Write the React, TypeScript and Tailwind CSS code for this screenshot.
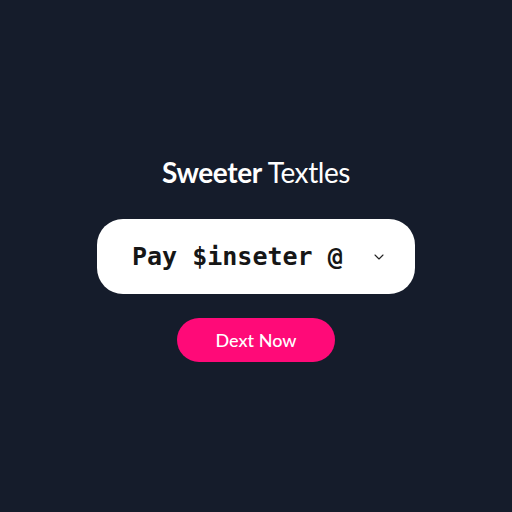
import React from "react";

const App = () => {
  return (
    <div className="w-[512px] h-[512px] bg-[#151c2b] flex flex-col items-center pt-[154px]">
      <h1 className="text-[28px] text-white leading-[36px] font-['Lato',sans-serif] tracking-[-0.4px]">
        <span className="font-bold">Sweeter</span>{" "}
        <span className="font-normal">Textles</span>
      </h1>
      <div className="mt-[29px] w-[318px] h-[75px] bg-white rounded-[26px] flex items-center pl-[35px] pr-[28px]">
        <span className="flex-1 font-['DejaVu_Sans_Mono',monospace] font-bold text-[25px] text-[#161616]">
          Pay $inseter @
        </span>
        <svg width="16" height="16" viewBox="0 0 24 24" fill="none" stroke="#222" strokeWidth="1.6" strokeLinecap="round" strokeLinejoin="round">
          <path d="M6 9l6 6 6-6" />
        </svg>
      </div>
      <button className="mt-[24px] w-[158px] h-[44px] rounded-full bg-[#ff0a78] text-white text-[18px] font-['Lato',sans-serif] font-medium">
        Dext Now
      </button>
    </div>
  );
};

export default App;
